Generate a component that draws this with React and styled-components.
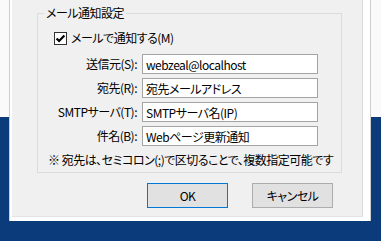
import styled, { createGlobalStyle } from 'styled-components';

const GlobalStyle = createGlobalStyle`
  html, body {
    margin: 0;
  }
  body {
    width: 381px;
    height: 241px;
    overflow: hidden;
    background: linear-gradient(#fafafa 0 117px, #0b3b7a 117px);
    font-family: "Noto Sans CJK JP", "Noto Sans", sans-serif;
    font-size: 12px;
    font-feature-settings: "palt";
    letter-spacing: -0.5px;
    color: #000;
  }
`;

const Frame = styled.div`
  margin-left: 9px;
  width: 362px;
  height: 221px;
  box-sizing: border-box;
  border-left: 1px solid #cdcdcd;
  border-right: 1px solid #cdcdcd;
  background: #fff;
  padding: 0 7px 4px 2px;
`;

const Dialog = styled.div`
  height: 100%;
  box-sizing: border-box;
  background: #f0f0f0;
  border-right: 1px solid #dadada;
  border-bottom: 1px solid #e3e3e3;
  padding: 5px 20px 0 25px;
`;

const Group = styled.fieldset`
  margin: 0;
  padding: 9px 0 4px 0;
  border: 1px solid #dcdcdc;
  min-width: 0;
`;

const Legend = styled.legend`
  margin-left: 6px;
  padding: 0 2px;
  line-height: 16px;
`;

const CheckRow = styled.label`
  display: flex;
  align-items: center;
  gap: 4px;
  margin-left: 16px;
  height: 16px;
  line-height: 16px;
`;

const Fields = styled.div`
  display: grid;
  grid-template-columns: 99px 176px;
  column-gap: 5px;
  row-gap: 4px;
  margin-top: 8px;
  align-items: center;
`;

const Label = styled.span`
  text-align: right;
  white-space: nowrap;
  line-height: 20px;
`;

const Field = styled.input`
  height: 20px;
  width: 100%;
  box-sizing: border-box;
  margin: 0;
  border: 1px solid #a3a3a3;
  background: #fff;
  padding: 0 3px;
  font: inherit;
  font-feature-settings: "palt";
  letter-spacing: inherit;
  color: #000;
  outline: none;
`;

const Note = styled.div`
  margin-top: 6px;
  padding-left: 10px;
  line-height: 16px;
  white-space: nowrap;
`;

const Buttons = styled.div`
  display: flex;
  justify-content: flex-end;
  gap: 24px;
  margin-top: 10px;
  padding-right: 9px;
`;

const Button = styled.button`
  width: 81px;
  height: 25px;
  box-sizing: border-box;
  margin: 0;
  padding: 0;
  background: #e1e1e1;
  border: 1px solid ${(p) => (p.$primary ? '#0078d7' : '#adadad')};
  font: inherit;
  font-feature-settings: "palt";
  letter-spacing: inherit;
  color: #000;
`;

const CheckBox = () => (
  <svg width="13" height="13" viewBox="0 0 13 13">
    <rect x="0.5" y="0.5" width="12" height="12" fill="#fff" stroke="#333" />
    <path d="M2.6 6.4 L5.1 9 L10.4 3.6" fill="none" stroke="#000" strokeWidth="2.2" />
  </svg>
);

const rows = [
  ['送信元(S):', 'webzeal@localhost'],
  ['宛先(R):', '宛先メールアドレス'],
  ['SMTPサーバ(T):', 'SMTPサーバ名(IP)'],
  ['件名(B):', 'Webページ更新通知'],
];

export default function App() {
  return (
    <>
      <GlobalStyle />
      <Frame>
        <Dialog>
          <Group>
            <Legend>メール通知設定</Legend>
            <CheckRow>
              <CheckBox />
              メールで通知する(M)
            </CheckRow>
            <Fields>
              {rows.map(([label, value]) => [
                <Label key={label + 'l'}>{label}</Label>,
                <Field key={label + 'f'} readOnly value={value} />,
              ])}
            </Fields>
            <Note>※ 宛先は、セミコロン(;)で区切ることで、複数指定可能です</Note>
          </Group>
          <Buttons>
            <Button $primary>OK</Button>
            <Button>キャンセル</Button>
          </Buttons>
        </Dialog>
      </Frame>
    </>
  );
}
